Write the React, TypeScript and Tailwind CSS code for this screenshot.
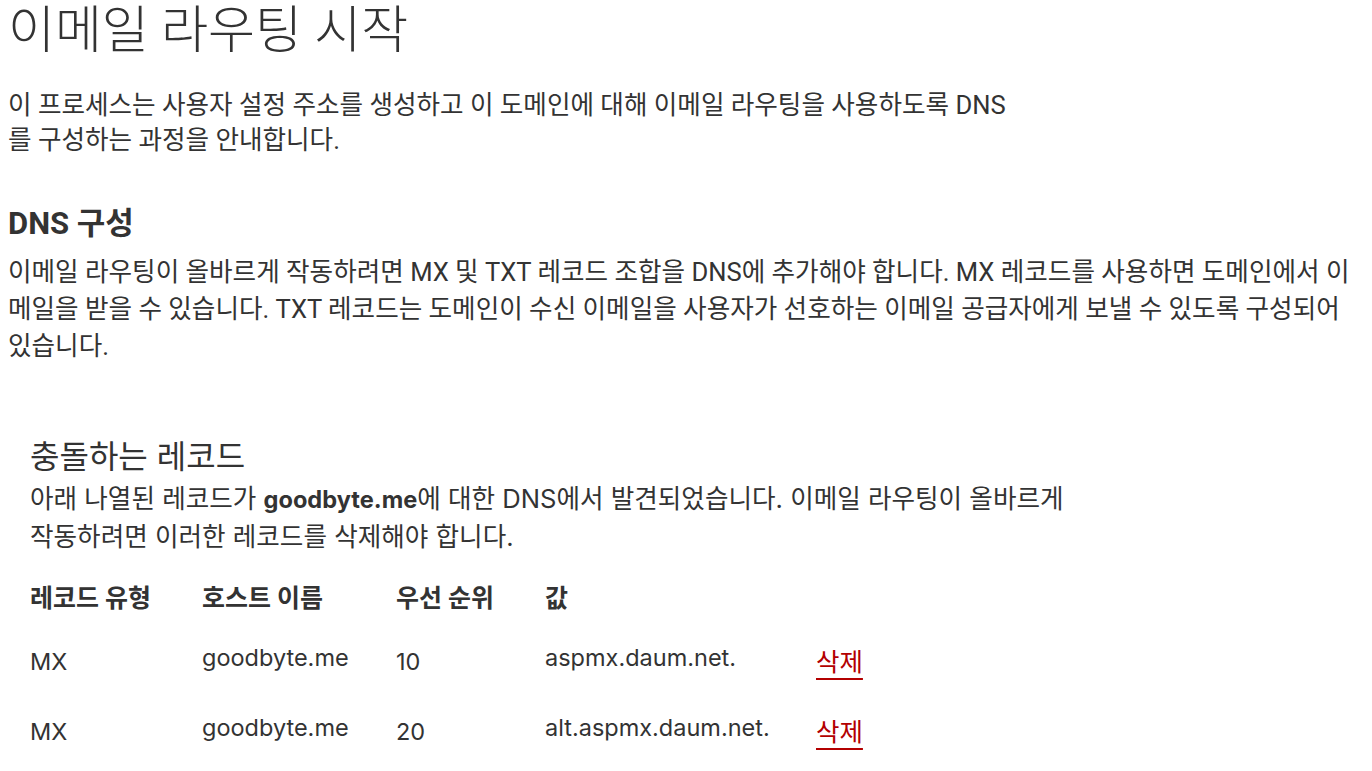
export default function App() {
  const rows = [
    { type: "MX", host: "goodbyte.me", prio: "10", value: "aspmx.daum.net." },
    { type: "MX", host: "goodbyte.me", prio: "20", value: "alt.aspmx.daum.net." },
  ];

  return (
    <div className="min-h-screen bg-white text-[#333] pl-2 pr-4 font-['Roboto','Noto_Sans_CJK_KR',sans-serif]">
      <h1 className="text-[51px] font-light leading-[62px]">이메일 라우팅 시작</h1>

      <p className="mt-[26px] max-w-[1012px] text-[25.6px] leading-[35px]">
        이 프로세스는 사용자 설정 주소를 생성하고 이 도메인에 대해 이메일 라우팅을 사용하도록 DNS를 구성하는 과정을 안내합니다.
      </p>

      <section className="mt-12">
        <h2 className="text-[31px] font-bold leading-9">DNS 구성</h2>
        <p className="mt-3 text-[25.6px] leading-[37px]">
          이메일 라우팅이 올바르게 작동하려면 MX 및 TXT 레코드 조합을 DNS에 추가해야 합니다. MX 레코드를 사용하면 도메인에서 이메일을 받을 수 있습니다. TXT 레코드는 도메인이 수신 이메일을 사용자가 선호하는 이메일 공급자에게 보낼 수 있도록 구성되어 있습니다.
        </p>
      </section>

      <section className="mt-[73px] pl-[22px] font-['Inter','Noto_Sans_CJK_KR',sans-serif]">
        <h3 className="text-[32px] leading-[38px]">충돌하는 레코드</h3>
        <p className="mt-1 max-w-[1040px] text-[25.6px] leading-[37px]">
          아래 나열된 레코드가 <b className="text-[23.6px] font-bold">goodbyte.me</b>에 대한 DNS에서 발견되었습니다. 이메일 라우팅이 올바르게 작동하려면 이러한 레코드를 삭제해야 합니다.
        </p>

        <table className="mt-7 border-collapse text-[23.5px]">
          <thead>
            <tr className="text-left">
              <th className="w-[172px] pb-[14px] text-[25px] font-bold leading-[30px]">레코드 유형</th>
              <th className="w-[194px] pb-[14px] text-[25px] font-bold leading-[30px]">호스트 이름</th>
              <th className="w-[149px] pb-[14px] text-[25px] font-bold leading-[30px]">우선 순위</th>
              <th className="w-[271px] pb-[14px] text-[25px] font-bold leading-[30px]">값</th>
              <th></th>
            </tr>
          </thead>
          <tbody>
            {rows.map((r) => (
              <tr key={r.value} className="h-[70px]">
                <td className="leading-[30px]">{r.type}</td>
                <td className="pb-2 leading-[30px]">{r.host}</td>
                <td className="leading-[30px]">{r.prio}</td>
                <td className="pb-2 leading-[30px]">{r.value}</td>
                <td className="leading-[30px]">
                  <a
                    href="#"
                    className="text-[25.5px] text-[#b30000] underline decoration-2 underline-offset-[7px]"
                  >
                    삭제
                  </a>
                </td>
              </tr>
            ))}
          </tbody>
        </table>
      </section>
    </div>
  );
}
